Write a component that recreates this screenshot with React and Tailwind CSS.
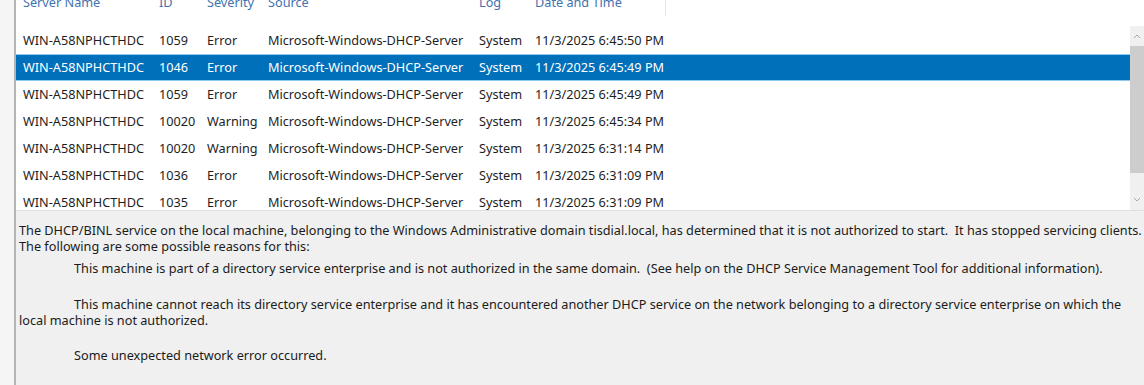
const rows = [
  { id: "1059", sev: "Error", time: "11/3/2025 6:45:50 PM" },
  { id: "1046", sev: "Error", time: "11/3/2025 6:45:49 PM", selected: true },
  { id: "1059", sev: "Error", time: "11/3/2025 6:45:49 PM" },
  { id: "10020", sev: "Warning", time: "11/3/2025 6:45:34 PM" },
  { id: "10020", sev: "Warning", time: "11/3/2025 6:31:14 PM" },
  { id: "1036", sev: "Error", time: "11/3/2025 6:31:09 PM" },
  { id: "1035", sev: "Error", time: "11/3/2025 6:31:09 PM" },
]

const Cells = ({ a, b, c, d, e, f }) => (
  <>
    <span className="w-[136px] shrink-0 whitespace-nowrap">{a}</span>
    <span className="w-[48px] shrink-0 whitespace-nowrap">{b}</span>
    <span className="w-[61px] shrink-0 whitespace-nowrap">{c}</span>
    <span className="w-[211px] shrink-0 whitespace-nowrap">{d}</span>
    <span className="w-[56px] shrink-0 whitespace-nowrap">{e}</span>
    <span className="whitespace-nowrap">{f}</span>
  </>
)

const App = () => {
  return (
    <div
      className="w-[1144px] h-[385px] flex overflow-hidden bg-white text-[12.7px] text-[#1e1e1e]"
      style={{ fontFamily: '"Noto Sans", "Open Sans", sans-serif' }}
    >
      {/* left strip */}
      <div className="w-[16px] shrink-0 bg-[#f5f5f5] border-r-2 border-[#b4b4b4]" />

      <div className="flex-1 flex flex-col min-w-0">
        {/* list */}
        <div className="h-[210px] shrink-0 flex flex-col overflow-hidden">
          <div className="h-[26px] shrink-0 -mt-[10px] flex">
            <div className="w-[650px] flex items-center pl-[7px] text-[#3f72af] border-r border-[#e8e8e8]">
              <Cells a="Server Name" b="ID" c="Severity" d="Source" e="Log" f="Date and Time" />
            </div>
          </div>
          <div className="flex-1 flex min-h-0 mt-[10px]">
            <div className="flex-1 flex flex-col min-w-0 pt-[1px]">
              {rows.map((r, i) => (
                <div
                  key={i}
                  className={
                    r.selected
                      ? "h-[27px] shrink-0 flex items-center pl-[7px] bg-[#0070bb] text-white border-y border-[#8cc8f0]"
                      : "h-[27px] shrink-0 flex items-center pl-[7px]"
                  }
                >
                  <Cells a="WIN-A58NPHCTHDC" b={r.id} c={r.sev} d="Microsoft-Windows-DHCP-Server" e="System" f={r.time} />
                </div>
              ))}
            </div>
            {/* scrollbar */}
            <div className="w-[14px] shrink-0 bg-[#f0f0f0] flex flex-col items-center">
              <svg width="10" height="20" viewBox="0 0 10 20" className="shrink-0">
                <path d="M2 12 L5 9 L8 12" fill="none" stroke="#a8a8a8" strokeWidth="1" />
              </svg>
              <div className="w-[14px] h-[127px] bg-[#cdcdcd]" />
              <div className="flex-1" />
              <svg width="10" height="20" viewBox="0 0 10 20" className="shrink-0">
                <path d="M2 8 L5 11 L8 8" fill="none" stroke="#a8a8a8" strokeWidth="1" />
              </svg>
            </div>
          </div>
        </div>

        {/* detail */}
        <div className="flex-1 bg-[#f0f0f0] border-t border-[#e0e0e0] pl-[3px] pt-[11px] leading-[16px] text-[#1b1b1b] whitespace-nowrap">
          <div>The DHCP/BINL service on the local machine, belonging to the Windows Administrative domain tisdial.local, has determined that it is not authorized to start.&nbsp; It has stopped servicing clients.</div>
          <div>The following are some possible reasons for this:</div>
          <div className="mt-[6px] pl-[55px]">This machine is part of a directory service enterprise and is not authorized in the same domain.&nbsp; (See help on the DHCP Service Management Tool for additional information).</div>
          <div className="mt-[20px] pl-[55px]">This machine cannot reach its directory service enterprise and it has encountered another DHCP service on the network belonging to a directory service enterprise on which the</div>
          <div>local machine is not authorized.</div>
          <div className="mt-[19px] pl-[55px]">Some unexpected network error occurred.</div>
        </div>
      </div>
    </div>
  )
}

export default App
